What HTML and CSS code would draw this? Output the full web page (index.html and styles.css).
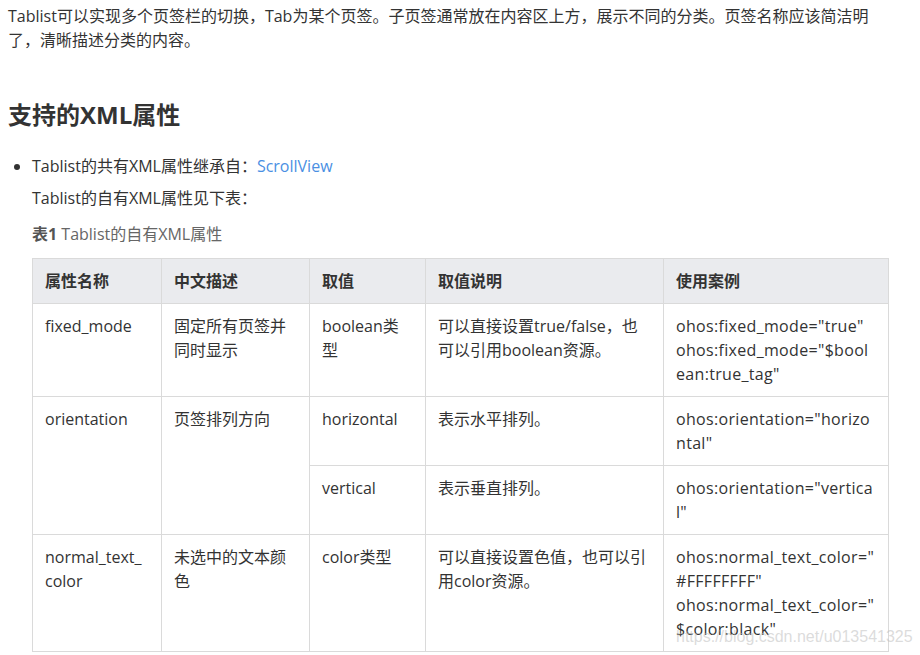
FILE: index.html
```html
<!DOCTYPE html>
<html lang="zh-CN">
<head>
<meta charset="utf-8">
<title>Tablist</title>
<link rel="stylesheet" href="styles.css">
</head>
<body>
<div class="page">
  <p class="intro">Tablist可以实现多个页签栏的切换，Tab为某个页签。子页签通常放在内容区上方，展示不同的分类。页签名称应该简洁明了，清晰描述分类的内容。</p>
  <h2 class="heading">支持的XML属性</h2>
  <ul class="list">
    <li class="item">
      <div class="line">Tablist的共有XML属性继承自：<a class="link" href="#">ScrollView</a></div>
      <p class="line sub">Tablist的自有XML属性见下表：</p>
      <p class="caption"><b>表1</b> Tablist的自有XML属性</p>
      <table class="attrs">
        <colgroup>
          <col class="c1"><col class="c2"><col class="c3"><col class="c4"><col class="c5">
        </colgroup>
        <thead>
          <tr><th>属性名称</th><th>中文描述</th><th>取值</th><th>取值说明</th><th>使用案例</th></tr>
        </thead>
        <tbody>
          <tr>
            <td>fixed_mode</td>
            <td>固定所有页签并同时显示</td>
            <td>boolean类型</td>
            <td>可以直接设置true/false，也可以引用boolean资源。</td>
            <td class="code">ohos:fixed_mode="true"<br>ohos:fixed_mode="$boolean:true_tag"</td>
          </tr>
          <tr>
            <td rowspan="2">orientation</td>
            <td rowspan="2">页签排列方向</td>
            <td>horizontal</td>
            <td>表示水平排列。</td>
            <td class="code">ohos:orientation="horizontal"</td>
          </tr>
          <tr>
            <td>vertical</td>
            <td>表示垂直排列。</td>
            <td class="code">ohos:orientation="vertical"</td>
          </tr>
          <tr>
            <td>normal_text_color</td>
            <td>未选中的文本颜色</td>
            <td>color类型</td>
            <td>可以直接设置色值，也可以引用color资源。</td>
            <td class="code">ohos:normal_text_color="#FFFFFFFF"<br>ohos:normal_text_color="$color:black"</td>
          </tr>
        </tbody>
      </table>
    </li>
  </ul>
</div>
<div class="watermark">https://blog.csdn.net/u013541325</div>
</body>
</html>
```

FILE: styles.css
```css
html, body {
  margin: 0;
  padding: 0;
  background: #ffffff;
}
body {
  font-family: "Open Sans", "Noto Sans CJK SC", sans-serif;
  font-size: 16px;
  line-height: 24px;
  color: #333333;
  overflow: hidden;
  height: 655px;
  position: relative;
}
.page {
  padding: 4px 8px 0 8px;
}
.intro {
  margin: 0;
  width: 880px;
}
.heading {
  margin: 47px 0 0 0;
  font-size: 24px;
  line-height: 32px;
  font-weight: 700;
  color: #333333;
}
.list {
  margin: 23px 0 0 0;
  padding: 0 0 0 24px;
}
.item {
  list-style: disc;
}
.line {
  margin: 0;
}
.sub {
  margin-top: 8px;
}
.link {
  color: #4a8fe3;
  text-decoration: none;
}
.caption {
  margin: 12px 0 0 0;
  color: #666666;
}
.caption b {
  color: #555555;
}
.attrs {
  margin-top: 12px;
  border-collapse: collapse;
  table-layout: fixed;
  width: 856px;
}
.c1 { width: 129px; }
.c2 { width: 148px; }
.c3 { width: 116px; }
.c4 { width: 238px; }
.c5 { width: 225px; }
.attrs th, .attrs td {
  border: 1px solid #dadada;
  padding: 10px 12px 10px 12px;
  text-align: left;
  vertical-align: top;
  word-break: break-all;
  overflow-wrap: anywhere;
}
.attrs th {
  background: #eaebee;
  font-weight: 700;
  color: #333333;
}
.attrs td.code {
  line-break: anywhere;
  letter-spacing: 0.32px;
}
.watermark {
  position: absolute;
  left: 676px;
  top: 625px;
  font-family: "Liberation Sans", sans-serif;
  font-size: 16px;
  line-height: 24px;
  color: rgba(190, 190, 190, 0.55);
  white-space: nowrap;
}
```
